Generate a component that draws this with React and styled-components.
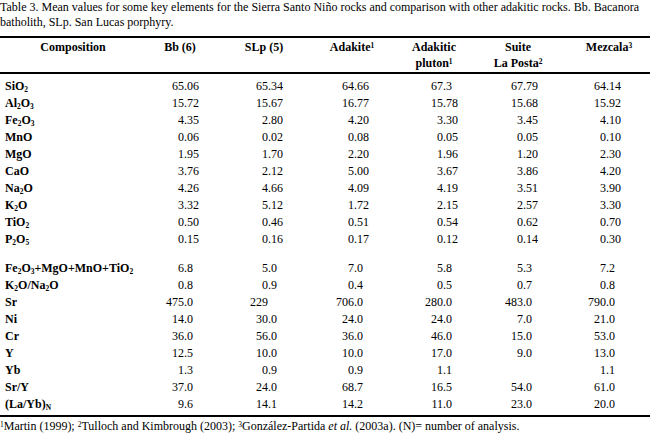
import React from "react"
import styled, { createGlobalStyle } from "styled-components"

const GlobalStyle = createGlobalStyle`
  html, body {
    margin: 0;
    padding: 0;
    background: #fff;
  }
  body {
    font-family: "Liberation Serif", "Times New Roman", serif;
    color: #000;
  }
`

// column setup: width, header shift, value right padding
const columns = [
  { width: 146 },
  { width: 78, shift: -5, pad: 25 },
  { width: 82, shift: -1, pad: 23 },
  { width: 92, shift: 0, pad: 29 },
  { width: 80, shift: -4, pad: 20 },
  { width: 84, shift: -2, pad: 24 },
  { width: 88, shift: 3, pad: 29 },
]

const upper = [
  ["SiO_2", "65.06", "65.34", "64.66", "67.3", "67.79", "64.14"],
  ["Al_2O_3", "15.72", "15.67", "16.77", "15.78", "15.68", "15.92"],
  ["Fe_2O_3", "4.35", "2.80", "4.20", "3.30", "3.45", "4.10"],
  ["MnO", "0.06", "0.02", "0.08", "0.05", "0.05", "0.10"],
  ["MgO", "1.95", "1.70", "2.20", "1.96", "1.20", "2.30"],
  ["CaO", "3.76", "2.12", "5.00", "3.67", "3.86", "4.20"],
  ["Na_2O", "4.26", "4.66", "4.09", "4.19", "3.51", "3.90"],
  ["K_2O", "3.32", "5.12", "1.72", "2.15", "2.57", "3.30"],
  ["TiO_2", "0.50", "0.46", "0.51", "0.54", "0.62", "0.70"],
  ["P_2O_5", "0.15", "0.16", "0.17", "0.12", "0.14", "0.30"],
]

const lower = [
  ["Fe_2O_3+MgO+MnO+TiO_2", "6.8", "5.0", "7.0", "5.8", "5.3", "7.2"],
  ["K_2O/Na_2O", "0.8", "0.9", "0.4", "0.5", "0.7", "0.8"],
  ["Sr", "475.0", "229", "706.0", "280.0", "483.0", "790.0"],
  ["Ni", "14.0", "30.0", "24.0", "24.0", "7.0", "21.0"],
  ["Cr", "36.0", "56.0", "36.0", "46.0", "15.0", "53.0"],
  ["Y", "12.5", "10.0", "10.0", "17.0", "9.0", "13.0"],
  ["Yb", "1.3", "0.9", "0.9", "1.1", "", "1.1"],
  ["Sr/Y", "37.0", "24.0", "68.7", "16.5", "54.0", "61.0"],
  ["(La/Yb)_N", "9.6", "14.1", "14.2", "11.0", "23.0", "20.0"],
]

const Page = styled.div`
  width: 652px;
  font-size: 12px;
`

const Caption = styled.p`
  margin: 0;
  font-size: 12px;
  line-height: 15px;
`

const Table = styled.table`
  margin-top: 6px;
  width: 650px;
  border-collapse: collapse;
  table-layout: fixed;
  font-size: 12px;
`

const Head = styled.thead`
  th {
    border-top: 2px solid #000;
    border-bottom: 2px solid #000;
  }
`

const HeadCell = styled.th`
  height: 33px;
  padding: 1px 0 0;
  padding-left: ${(p) => Math.max(p.$shift, 0) * 2}px;
  padding-right: ${(p) => Math.max(-p.$shift, 0) * 2}px;
  vertical-align: top;
  text-align: center;
  font-weight: bold;
  line-height: 16px;
`

const Body = styled.tbody`
  &:last-of-type tr:last-child td {
    border-bottom: 2px solid #000;
    padding-bottom: 2px;
  }
`

const Row = styled.tr`
  &:first-child td {
    padding-top: ${(p) => (p.$lead ? `${p.$lead}px` : "0")};
  }
`

const Label = styled.td`
  padding: 0 0 0 5px;
  height: 17px;
  line-height: 17px;
  font-weight: bold;
  white-space: nowrap;
`

const Value = styled.td`
  padding: 0 ${(p) => p.$pad}px 0 0;
  height: 17px;
  line-height: 17px;
  text-align: right;
  white-space: nowrap;
`

const Hidden = styled.span`
  visibility: hidden;
`

const Sub = styled.sub`
  font-size: 0.62em;
  line-height: 0;
  vertical-align: -0.25em;
`

const Sup = styled.sup`
  font-size: 0.62em;
  line-height: 0;
  vertical-align: 0.45em;
`

const Footnote = styled.p`
  margin: 2px 0 0;
  font-size: 12px;
  line-height: 15px;
`

const Formula = ({ text }) =>
  text.split(/(_\w)/).map((part, i) =>
    part.startsWith("_") ? <Sub key={i}>{part.slice(1)}</Sub> : part
  )

// keep decimals lined up against a two-decimal reference
const fill = (v) => {
  if (!v) return ""
  const [, dec] = v.split(".")
  if (dec === undefined) return ".00"
  return "0".repeat(2 - dec.length)
}

const DataRows = ({ rows, lead }) =>
  rows.map((r, i) => (
    <Row key={r[0]} $lead={i === 0 ? lead : 0}>
      <Label>
        <Formula text={r[0]} />
      </Label>
      {r.slice(1).map((v, j) => (
        <Value key={j} $pad={columns[j + 1].pad}>
          {v}
          <Hidden>{fill(v)}</Hidden>
        </Value>
      ))}
    </Row>
  ))

const App = () => {
  return (
    <Page>
      <GlobalStyle />
      <Caption>
        Table 3. Mean values for some key elements for the Sierra Santo Niño rocks and
        comparison with other adakitic rocks. Bb. Bacanora batholith, SLp. San Lucas
        porphyry.
      </Caption>
      <Table>
        <colgroup>
          {columns.map((c, i) => (
            <col key={i} style={{ width: c.width }} />
          ))}
        </colgroup>
        <Head>
          <tr>
            <HeadCell $shift={0}>Composition</HeadCell>
            <HeadCell $shift={columns[1].shift}>Bb (6)</HeadCell>
            <HeadCell $shift={columns[2].shift}>SLp (5)</HeadCell>
            <HeadCell $shift={columns[3].shift}>
              Adakite<Sup>1</Sup>
            </HeadCell>
            <HeadCell $shift={columns[4].shift}>
              Adakitic
              <br />
              pluton<Sup>1</Sup>
            </HeadCell>
            <HeadCell $shift={columns[5].shift}>
              Suite
              <br />
              La Posta<Sup>2</Sup>
            </HeadCell>
            <HeadCell $shift={columns[6].shift}>
              Mezcala<Sup>3</Sup>
            </HeadCell>
          </tr>
        </Head>
        <Body>
          <DataRows rows={upper} lead={4} />
        </Body>
        <Body>
          <DataRows rows={lower} lead={12} />
        </Body>
      </Table>
      <Footnote>
        <Sup>1</Sup>Martin (1999); <Sup>2</Sup>Tulloch and Kimbrough (2003);{" "}
        <Sup>3</Sup>González-Partida <i>et al.</i> (2003a). (N)= number of analysis.
      </Footnote>
    </Page>
  )
}

export default App
